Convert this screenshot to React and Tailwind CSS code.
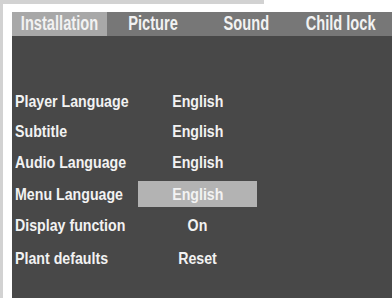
import React from "react";

const font = { fontFamily: '"Liberation Sans", Arial, sans-serif' };

const rows = [
  { label: "Player Language", value: "English", cls: "mt-0" },
  { label: "Subtitle", value: "English", cls: "mt-0" },
  { label: "Audio Language", value: "English", cls: "mt-px" },
  { label: "Menu Language", value: "English", cls: "mt-[2px]", sel: true },
  { label: "Display function", value: "On", cls: "mt-px" },
  { label: "Plant defaults", value: "Reset", cls: "mt-[3px]" },
];

function Tab({ w, active, children }) {
  return (
    <div className={`${w} flex items-center justify-center ${active ? "bg-[#a8a8a8]" : ""}`}>
      <span className="inline-block whitespace-nowrap scale-x-[0.75]">{children}</span>
    </div>
  );
}

export default function App() {
  return (
    <div className="w-[392px] h-[298px] bg-white flex overflow-hidden font-bold text-[#f2f2f2]" style={font}>
      <div className="w-[3px] h-full bg-[#d2d2d2] shrink-0" />
      <div className="flex-1 flex flex-col">
        <div className="h-[4px] w-[261px] bg-[#d2d2d2]" />
        <div className="flex-1 flex flex-col mt-[8px] ml-[9px]">
          <div className="h-[24px] flex bg-[#777777] text-[19.5px] leading-none">
            <Tab w="w-[95px]" active>Installation</Tab>
            <Tab w="w-[93px]">Picture</Tab>
            <Tab w="w-[92px]">Sound</Tab>
            <Tab w="w-[97px]">Child lock</Tab>
          </div>
          <div className="flex-1 bg-[#484848] pt-[50px] text-[16.5px] leading-none">
            {rows.map((r) => (
              <div key={r.label} className={`h-[30px] flex items-center ${r.cls}`}>
                <div className="w-[126px] pl-[3px] whitespace-nowrap">
                  <span className="inline-block origin-left scale-x-[0.86]">{r.label}</span>
                </div>
                <div className={`w-[119px] h-[26px] flex items-center justify-center ${r.sel ? "bg-[#b3b3b3]" : ""}`}>
                  <span className="inline-block scale-x-[0.86]">{r.value}</span>
                </div>
              </div>
            ))}
          </div>
        </div>
      </div>
    </div>
  );
}
